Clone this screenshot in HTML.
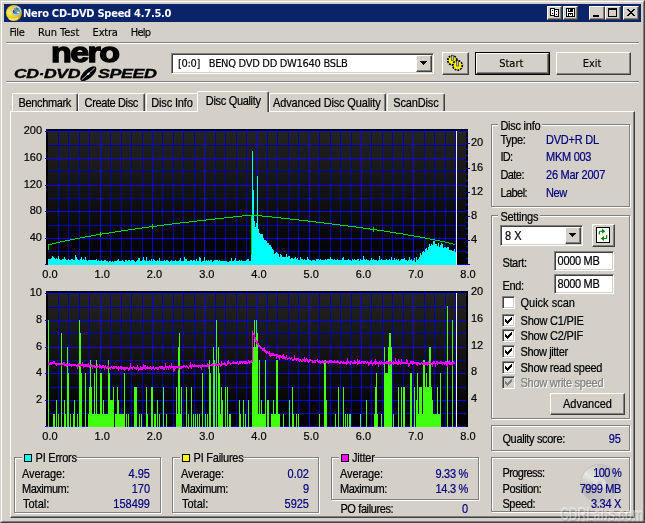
<!DOCTYPE html>
<html><head><meta charset="utf-8"><title>Nero CD-DVD Speed 4.7.5.0</title>
<style>
*{box-sizing:border-box;margin:0;padding:0}
html,body{width:645px;height:523px;overflow:hidden;background:#D4D0C8}
body{position:relative;font-family:"Liberation Sans",sans-serif;font-size:11px;color:#000;line-height:13px}
.a{position:absolute;white-space:nowrap}
.th{font-family:"DejaVu Sans Condensed","Liberation Sans",sans-serif;font-size:11px}
.t{transform:scaleY(1.125);transform-origin:0 0;-webkit-text-stroke:0.2px}
.th{-webkit-text-stroke:0.15px}
.nv{color:#000080}
.r{text-align:right}
/* window frame */
#win{left:0;top:0;width:645px;height:523px;border:1px solid;border-color:#D4D0C8 #404040 #404040 #D4D0C8}
#win2{left:1px;top:1px;width:643px;height:521px;border:1px solid;border-color:#fff #808080 #808080 #fff}
#title{left:4px;top:4px;width:637px;height:18px;background:#0A246A}
#title span{position:absolute;left:19px;letter-spacing:-0.25px;top:3px;color:#fff;font-weight:bold;font-family:"DejaVu Sans Condensed","Liberation Sans",sans-serif;font-size:11px;line-height:14px}
.btn{background:#D4D0C8;border:1px solid;border-color:#fff #404040 #404040 #fff;box-shadow:inset -1px -1px 0 #808080, inset 1px 1px 0 #D4D0C8}
.btn2{background:#D4D0C8;border:1px solid;border-color:#fff #404040 #404040 #fff;box-shadow:inset -1px -1px 0 #808080}
.sunk{background:#fff;border:1px solid;border-color:#808080 #fff #fff #808080;box-shadow:inset 1px 1px 0 #404040, inset -1px -1px 0 #D4D0C8}
.sep{height:2px;border-top:1px solid #808080;border-bottom:1px solid #fff}
.grp{border:1px solid #808080;box-shadow:1px 1px 0 #fff, inset 1px 1px 0 #fff}
.lg{background:#D4D0C8;padding:0 2px}
.tab{height:18px;border:1px solid;border-color:#fff #404040 transparent #fff;border-bottom:none;border-radius:2px 2px 0 0;box-shadow:inset -1px 0 0 #808080;background:#D4D0C8}
.lgo{font-size:12px;line-height:14px;font-weight:bold;font-style:italic;transform-origin:0 0;letter-spacing:-0.3px;-webkit-text-stroke:0.35px #000}
.cb{width:13px;height:13px}
.sq{width:8px;height:8px;border:1px solid #000}
#root{position:absolute;left:0;top:0;width:645px;height:523px;will-change:transform}
</style></head><body><div id="root">
<div class="a" id="win"></div><div class="a" id="win2"></div>
<div class="a" id="title"><span>Nero CD-DVD Speed 4.7.5.0</span></div>
<!-- title icon -->
<svg class="a" style="left:4px;top:4px" width="20" height="18" viewBox="4 4 20 18">
<defs><radialGradient id="ig" cx="0.3" cy="0.45" r="0.75"><stop offset="0" stop-color="#fff27a"/><stop offset="0.45" stop-color="#ecd21c"/><stop offset="0.8" stop-color="#d8b810"/><stop offset="1" stop-color="#9c8408"/></radialGradient></defs>
<circle cx="14" cy="13" r="8" fill="url(#ig)"/><path d="M9 18.500q4 2.500 9-0.500" stroke="#fff6b0" stroke-width="1.500" fill="none" opacity="0.700"/>
<circle cx="16.200" cy="10.800" r="4.600" fill="#e4e4ec" stroke="#a8a8b8" stroke-width="0.600"/><circle cx="16.300" cy="10.900" r="3.500" fill="#2c9ce0"/>
<path d="M18.300 8.200a3.500 3.500 0 0 0-2.500-0.800l0.500 2z" fill="#209030"/><path d="M13.300 9.500l1.300 3.800-1.200-0.300a3.500 3.500 0 0 1-0.100-3.500z" fill="#a01010"/>
<path d="M15 8.200l1.300 2.600 1.900 1.400" stroke="#ff7040" stroke-width="1.200" fill="none"/><circle cx="13.600" cy="9.300" r="0.700" fill="#ffe000"/><circle cx="18" cy="12.400" r="0.900" fill="#fff"/>
</svg>
<!-- caption buttons -->
<div class="a btn2" style="left:547px;top:6px;width:15px;height:14px"></div>
<div class="a btn2" style="left:563px;top:6px;width:15px;height:14px"></div>
<div class="a btn2" style="left:589px;top:6px;width:16px;height:14px"></div>
<div class="a btn2" style="left:605px;top:6px;width:16px;height:14px"></div>
<div class="a btn2" style="left:623px;top:6px;width:16px;height:14px"></div>
<svg class="a" style="left:547px;top:6px" width="92" height="14" viewBox="547 6 92 14" shape-rendering="crispEdges">
<rect x="550" y="8" width="5" height="8" fill="#000"/><rect x="551" y="9" width="3" height="6" fill="#fff"/><rect x="552" y="10" width="1" height="1" fill="#000"/><rect x="552" y="13" width="1" height="1" fill="#000"/>
<rect x="554" y="9" width="5" height="8" fill="#000"/><rect x="555" y="10" width="3" height="6" fill="#fff"/><rect x="556" y="11" width="1" height="1" fill="#000"/><rect x="556" y="14" width="1" height="1" fill="#000"/>
<rect x="566" y="8" width="9" height="9" fill="#000"/><rect x="567" y="9" width="1" height="7" fill="#fff"/><rect x="573" y="9" width="1" height="7" fill="#fff"/><rect x="568" y="12" width="5" height="1" fill="#fff"/><rect x="569" y="9" width="1" height="2" fill="#fff"/><rect x="569" y="14" width="3" height="2" fill="#fff"/><rect x="570" y="14" width="1" height="1" fill="#000"/>
<rect x="593" y="15" width="6" height="2" fill="#000"/>
<rect x="608" y="8" width="9" height="9" fill="#000"/><rect x="609" y="10" width="7" height="6" fill="#D4D0C8"/>
<path d="M627 9h2v1h1v1h2v-1h1v-1h2v1h-1v1h-1v1h-1v1h1v1h1v1h1v1h-2v-1h-1v-1h-2v1h-1v1h-2v-1h1v-1h1v-1h1v-1h-1v-1h-1v-1h-1z" fill="#000"/>
</svg>
<!-- menu -->
<div class="a th" style="left:9.5px;top:26px;letter-spacing:-0.4px">File</div>
<div class="a th" style="left:38px;top:26px">Run Test</div>
<div class="a th" style="left:92.6px;top:26px;letter-spacing:-0.2px">Extra</div>
<div class="a th" style="left:130.8px;top:26px;letter-spacing:-0.8px">Help</div>
<div class="a sep" style="left:6px;top:42px;width:633px"></div>
<!-- logo -->
<div class="a" id="nero" style="left:51.2px;top:37.4px;font-size:28px;line-height:32px;font-weight:bold;letter-spacing:-1.3px;-webkit-text-stroke:1.3px #000;transform-origin:0 0;transform:scaleX(1.215)">nero</div>
<div class="a lgo" id="cds1" style="left:14.3px;top:67.4px;transform:scaleX(1.47)">CD·DVD</div>
<div class="a lgo" id="cds2" style="left:98px;top:67.4px;transform:scaleX(1.49)">SPEED</div>
<svg class="a" style="left:78px;top:64px" width="22" height="20" viewBox="78 64 22 20"><g transform="rotate(-42 88.300 73.800)"><ellipse cx="88.300" cy="73.800" rx="10" ry="4.400" fill="#000"/><path d="M79.500 73.800H97" stroke="#D4D0C8" stroke-width="0.900"/><ellipse cx="88.300" cy="73.800" rx="1.600" ry="0.900" fill="#fff"/></g></svg>
<!-- drive combobox -->
<div class="a sunk" style="left:171px;top:53px;width:263px;height:21px"></div>
<div class="a th" style="left:178px;top:57px;line-height:14px;letter-spacing:-0.3px">[0:0]&nbsp;&nbsp;&nbsp;BENQ DVD DD DW1640 BSLB</div>
<div class="a btn" style="left:416px;top:55px;width:16px;height:17px"></div>
<svg class="a" style="left:420px;top:61px" width="8" height="5" viewBox="0 0 8 5" shape-rendering="crispEdges"><path d="M0 0h7l-3.5 4z" fill="#000"/></svg>
<!-- options button -->
<div class="a btn" style="left:442px;top:52px;width:27px;height:23px"></div>
<svg class="a" style="left:444px;top:53px" width="24" height="21" viewBox="444 53 24 21">
<g stroke="#000" stroke-width="1"><circle cx="452.300" cy="60.300" r="4.300" fill="#f4f000" stroke-dasharray="1.700 1" stroke-width="2.200"/><circle cx="452.300" cy="60.300" r="3.600" fill="#f4f000" stroke="none"/>
<circle cx="457.600" cy="65.400" r="4.500" fill="#f4f000" stroke-dasharray="1.700 1" stroke-width="2.200"/><circle cx="457.600" cy="65.400" r="3.800" fill="#f4f000" stroke="none"/></g>
<rect x="451.500" y="55.200" width="2" height="5.300" fill="#c8c8e0" stroke="#202020" stroke-width="0.600"/><rect x="456.700" y="60.800" width="2" height="5.200" fill="#c8c8e0" stroke="#202020" stroke-width="0.600"/>
</svg>
<!-- start / exit -->
<div class="a" style="left:475px;top:52px;width:75px;height:23px;border:1px solid #000"></div>
<div class="a btn" style="left:476px;top:53px;width:73px;height:21px"></div>
<div class="a th" style="left:473.8px;top:57px;width:75px;text-align:center;line-height:14px;letter-spacing:0px">Start</div>
<div class="a btn" style="left:556px;top:52px;width:75px;height:23px"></div>
<div class="a th" style="left:554.5px;top:57px;width:75px;text-align:center;line-height:14px;letter-spacing:0px">Exit</div>
<div class="a sep" style="left:6px;top:81px;width:633px"></div>
<!-- tab page -->
<div class="a" style="left:10px;top:111px;width:625px;height:407px;border:1px solid;border-color:#fff #404040 #404040 #fff;box-shadow:inset -1px -1px 0 #808080"></div>
<!-- tabs -->
<div class="a tab" style="left:12px;top:93px;width:66px"></div><div class="a t" style="left:18.6px;top:96px;letter-spacing:-0.38px">Benchmark</div>
<div class="a tab" style="left:78px;top:93px;width:67px"></div><div class="a t" style="left:84.6px;top:96px;letter-spacing:-0.38px">Create Disc</div>
<div class="a tab" style="left:146px;top:93px;width:54px"></div><div class="a t" style="left:151.2px;top:96px;letter-spacing:-0.14px">Disc Info</div>
<div class="a tab" style="left:269px;top:93px;width:117px"></div><div class="a t" style="left:273px;top:96px;letter-spacing:-0.15px">Advanced Disc Quality</div>
<div class="a tab" style="left:387px;top:93px;width:58px"></div><div class="a t" style="left:393.3px;top:96px;letter-spacing:-0.16px">ScanDisc</div>
<div class="a tab" style="left:197px;top:91px;width:72px;height:21px"></div><div class="a t" style="left:205.8px;top:94px;letter-spacing:-0.32px">Disc Quality</div>
<svg width="645" height="523" viewBox="0 0 645 523" style="position:absolute;left:0;top:0" shape-rendering="crispEdges">
<defs><linearGradient id="g1" x1="0" y1="0" x2="0" y2="1"><stop offset="0" stop-color="#232421"/><stop offset="1" stop-color="#000"/></linearGradient></defs>
<defs><linearGradient id="g1b" x1="0" y1="0" x2="0" y2="1"><stop offset="0" stop-color="#232421"/><stop offset="1" stop-color="#000"/></linearGradient></defs>
<rect x="46" y="129" width="422" height="136" fill="#000"/>
<rect x="48" y="131" width="418" height="134" fill="url(#g1)"/>
<rect x="58" y="131" width="1" height="134" fill="#0000B4"/>
<rect x="68" y="131" width="1" height="134" fill="#0000B4"/>
<rect x="79" y="131" width="1" height="134" fill="#0000B4"/>
<rect x="89" y="131" width="1" height="134" fill="#0000B4"/>
<rect x="100" y="131" width="1" height="134" fill="#0000FF"/>
<rect x="110" y="131" width="1" height="134" fill="#0000B4"/>
<rect x="121" y="131" width="1" height="134" fill="#0000B4"/>
<rect x="131" y="131" width="1" height="134" fill="#0000B4"/>
<rect x="142" y="131" width="1" height="134" fill="#0000B4"/>
<rect x="152" y="131" width="1" height="134" fill="#0000FF"/>
<rect x="162" y="131" width="1" height="134" fill="#0000B4"/>
<rect x="173" y="131" width="1" height="134" fill="#0000B4"/>
<rect x="183" y="131" width="1" height="134" fill="#0000B4"/>
<rect x="194" y="131" width="1" height="134" fill="#0000B4"/>
<rect x="204" y="131" width="1" height="134" fill="#0000FF"/>
<rect x="215" y="131" width="1" height="134" fill="#0000B4"/>
<rect x="225" y="131" width="1" height="134" fill="#0000B4"/>
<rect x="236" y="131" width="1" height="134" fill="#0000B4"/>
<rect x="246" y="131" width="1" height="134" fill="#0000B4"/>
<rect x="257" y="131" width="1" height="134" fill="#0000FF"/>
<rect x="267" y="131" width="1" height="134" fill="#0000B4"/>
<rect x="277" y="131" width="1" height="134" fill="#0000B4"/>
<rect x="288" y="131" width="1" height="134" fill="#0000B4"/>
<rect x="298" y="131" width="1" height="134" fill="#0000B4"/>
<rect x="309" y="131" width="1" height="134" fill="#0000FF"/>
<rect x="319" y="131" width="1" height="134" fill="#0000B4"/>
<rect x="330" y="131" width="1" height="134" fill="#0000B4"/>
<rect x="340" y="131" width="1" height="134" fill="#0000B4"/>
<rect x="351" y="131" width="1" height="134" fill="#0000B4"/>
<rect x="361" y="131" width="1" height="134" fill="#0000FF"/>
<rect x="371" y="131" width="1" height="134" fill="#0000B4"/>
<rect x="382" y="131" width="1" height="134" fill="#0000B4"/>
<rect x="392" y="131" width="1" height="134" fill="#0000B4"/>
<rect x="403" y="131" width="1" height="134" fill="#0000B4"/>
<rect x="413" y="131" width="1" height="134" fill="#0000FF"/>
<rect x="424" y="131" width="1" height="134" fill="#0000B4"/>
<rect x="434" y="131" width="1" height="134" fill="#0000B4"/>
<rect x="445" y="131" width="1" height="134" fill="#0000B4"/>
<rect x="455" y="131" width="1" height="134" fill="#0000B4"/>
<rect x="45" y="131" width="421" height="1" fill="#0000FF"/>
<rect x="48" y="145" width="418" height="1" fill="#0000B4"/>
<rect x="45" y="158" width="421" height="1" fill="#0000FF"/>
<rect x="48" y="171" width="418" height="1" fill="#0000B4"/>
<rect x="45" y="185" width="421" height="1" fill="#0000FF"/>
<rect x="48" y="198" width="418" height="1" fill="#0000B4"/>
<rect x="45" y="211" width="421" height="1" fill="#0000FF"/>
<rect x="48" y="225" width="418" height="1" fill="#0000B4"/>
<rect x="45" y="238" width="421" height="1" fill="#0000FF"/>
<rect x="48" y="251" width="418" height="1" fill="#0000B4"/>
<rect x="45" y="264" width="421" height="1" fill="#0000FF"/>
<path d="M48,265V259H49V259H50V259H51V258H52V256H53V257H54V258H55V259H56V258H57V259H58V256H59V259H60V260H61V260H62V259H63V259H64V257H65V259H66V260H67V260H68V259H69V260H70V260H71V259H72V259H73V260H74V260H75V255H76V257H77V259H78V260H79V260H80V259H81V257H82V260H83V259H84V260H85V257H86V260H87V261H88V260H89V260H90V260H91V260H92V260H93V260H94V260H95V260H96V259H97V261H98V260H99V261H100V261H101V260H102V261H103V261H104V260H105V260H106V261H107V261H108V262H109V261H110V261H111V262H112V261H113V262H114V261H115V261H116V261H117V260H118V259H119V261H120V261H121V261H122V260H123V261H124V262H125V260H126V260H127V261H128V260H129V260H130V261H131V260H132V260H133V260H134V261H135V262H136V261H137V260H138V258H139V258H140V261H141V261H142V260H143V257H144V260H145V261H146V257H147V261H148V261H149V260H150V261H151V259H152V261H153V259H154V260H155V261H156V261H157V260H158V261H159V258H160V261H161V261H162V261H163V261H164V260H165V261H166V260H167V260H168V261H169V262H170V261H171V260H172V261H173V261H174V261H175V260H176V261H177V261H178V261H179V260H180V258H181V261H182V261H183V261H184V257H185V259H186V259H187V261H188V261H189V261H190V260H191V260H192V261H193V260H194V260H195V261H196V259H197V261H198V261H199V257H200V258H201V262H202V261H203V261H204V257H205V261H206V260H207V261H208V260H209V261H210V260H211V260H212V262H213V261H214V260H215V260H216V260H217V260H218V261H219V260H220V261H221V261H222V261H223V261H224V261H225V261H226V261H227V262H228V262H229V261H230V261H231V258H232V261H233V261H234V260H235V258H236V261H237V261H238V261H239V260H240V261H241V260H242V261H243V261H244V261H245V261H246V260H247V259H248V259H249V261H250V261H251V223H252V151H253V190H254V221H255V227H256V223H257V176H258V229H259V233H260V234H261V234H262V234H263V238H264V240H265V240H266V241H267V243H268V243H269V245H270V245H271V247H272V249H273V250H274V254H275V253H276V252H277V253H278V254H279V257H280V254H281V255H282V257H283V257H284V257H285V257H286V254H287V257H288V256H289V256H290V259H291V258H292V258H293V259H294V258H295V257H296V259H297V258H298V260H299V260H300V257H301V259H302V259H303V260H304V259H305V260H306V260H307V257H308V259H309V260H310V260H311V261H312V260H313V260H314V260H315V261H316V259H317V259H318V259H319V260H320V259H321V260H322V260H323V260H324V260H325V259H326V260H327V259H328V259H329V259H330V257H331V259H332V259H333V260H334V259H335V260H336V260H337V259H338V260H339V260H340V260H341V260H342V258H343V257H344V260H345V260H346V260H347V260H348V259H349V260H350V260H351V261H352V259H353V260H354V259H355V260H356V260H357V259H358V259H359V261H360V259H361V260H362V260H363V256H364V259H365V260H366V259H367V260H368V260H369V261H370V260H371V258H372V260H373V259H374V260H375V260H376V260H377V261H378V260H379V256H380V260H381V259H382V260H383V260H384V260H385V260H386V259H387V260H388V260H389V259H390V260H391V257H392V260H393V260H394V258H395V260H396V259H397V260H398V259H399V261H400V260H401V259H402V259H403V259H404V258H405V260H406V260H407V261H408V260H409V257H410V260H411V259H412V261H413V260H414V258H415V262H416V257H417V260H418V259H419V257H420V253H421V255H422V252H423V251H424V252H425V249H426V248H427V250H428V247H429V244H430V246H431V244H432V245H433V241H434V241H435V244H436V244H437V246H438V243H439V247H440V245H441V243H442V244H443V248H444V247H445V247H446V248H447V247H448V247H449V250H450V250H451V250H452V251H453V251H454V249H455V252H456V265Z" fill="#00FFFF"/>
<path d="M48,244h1v6h-1zM48,244h1v1h-1zM49,244h1v1h-1zM50,244h1v1h-1zM51,244h1v1h-1zM52,243h1v1h-1zM53,243h1v1h-1zM54,243h1v1h-1zM55,243h1v1h-1zM56,242h1v1h-1zM57,242h1v1h-1zM58,242h1v1h-1zM59,242h1v1h-1zM60,241h1v1h-1zM61,241h1v1h-1zM62,241h1v1h-1zM63,241h1v1h-1zM64,241h1v1h-1zM65,240h1v1h-1zM66,240h1v1h-1zM67,240h1v1h-1zM68,240h1v1h-1zM69,240h1v1h-1zM70,239h1v1h-1zM71,239h1v1h-1zM72,239h1v1h-1zM73,239h1v1h-1zM74,239h1v1h-1zM75,238h1v1h-1zM76,238h1v1h-1zM77,238h1v1h-1zM78,238h1v1h-1zM79,238h1v1h-1zM80,237h1v1h-1zM81,237h1v1h-1zM82,237h1v1h-1zM83,237h1v1h-1zM84,237h1v1h-1zM85,236h1v1h-1zM86,236h1v1h-1zM87,236h1v1h-1zM88,236h1v1h-1zM89,236h1v1h-1zM90,236h1v1h-1zM91,235h1v1h-1zM92,235h1v1h-1zM93,235h1v1h-1zM94,235h1v1h-1zM95,235h1v1h-1zM96,234h1v1h-1zM97,234h1v1h-1zM98,234h1v1h-1zM99,234h1v1h-1zM100,234h1v1h-1zM101,234h1v1h-1zM102,233h1v1h-1zM103,233h1v1h-1zM104,233h1v1h-1zM105,233h1v1h-1zM106,233h1v1h-1zM107,233h1v1h-1zM108,233h1v1h-1zM109,232h1v1h-1zM110,232h1v1h-1zM111,232h1v1h-1zM112,232h1v1h-1zM113,232h1v1h-1zM114,232h1v1h-1zM115,231h1v1h-1zM116,231h1v1h-1zM117,231h1v1h-1zM118,231h1v1h-1zM119,231h1v1h-1zM120,231h1v1h-1zM121,230h1v1h-1zM122,230h1v1h-1zM123,230h1v1h-1zM124,230h1v1h-1zM125,230h1v1h-1zM126,230h1v1h-1zM127,230h1v1h-1zM128,229h1v1h-1zM129,229h1v1h-1zM130,229h1v1h-1zM131,229h1v1h-1zM132,229h1v1h-1zM133,229h1v1h-1zM134,229h1v1h-1zM135,228h1v1h-1zM136,228h1v1h-1zM137,228h1v1h-1zM138,228h1v1h-1zM139,228h1v1h-1zM140,228h1v1h-1zM141,228h1v1h-1zM142,227h1v1h-1zM143,227h1v1h-1zM144,227h1v1h-1zM145,227h1v1h-1zM146,227h1v1h-1zM147,227h1v1h-1zM148,227h1v1h-1zM149,226h1v1h-1zM150,226h1v1h-1zM151,226h1v1h-1zM152,226h1v1h-1zM153,226h1v1h-1zM154,226h1v1h-1zM155,226h1v1h-1zM156,226h1v1h-1zM157,225h1v1h-1zM158,225h1v1h-1zM159,225h1v1h-1zM160,225h1v1h-1zM161,225h1v1h-1zM162,225h1v1h-1zM163,225h1v1h-1zM164,224h1v1h-1zM165,224h1v1h-1zM166,224h1v1h-1zM167,224h1v1h-1zM168,224h1v1h-1zM169,224h1v1h-1zM170,224h1v1h-1zM171,224h1v1h-1zM172,223h1v1h-1zM173,223h1v1h-1zM174,223h1v1h-1zM175,223h1v1h-1zM176,223h1v1h-1zM177,223h1v1h-1zM178,223h1v1h-1zM179,223h1v1h-1zM180,222h1v1h-1zM181,222h1v1h-1zM182,222h1v1h-1zM183,222h1v1h-1zM184,222h1v1h-1zM185,222h1v1h-1zM186,222h1v1h-1zM187,222h1v1h-1zM188,222h1v1h-1zM189,221h1v1h-1zM190,221h1v1h-1zM191,221h1v1h-1zM192,221h1v1h-1zM193,221h1v1h-1zM194,221h1v1h-1zM195,221h1v1h-1zM196,221h1v1h-1zM197,220h1v1h-1zM198,220h1v1h-1zM199,220h1v1h-1zM200,220h1v1h-1zM201,220h1v1h-1zM202,220h1v1h-1zM203,220h1v1h-1zM204,220h1v1h-1zM205,220h1v1h-1zM206,219h1v1h-1zM207,219h1v1h-1zM208,219h1v1h-1zM209,219h1v1h-1zM210,219h1v1h-1zM211,219h1v1h-1zM212,219h1v1h-1zM213,219h1v1h-1zM214,219h1v1h-1zM215,218h1v1h-1zM216,218h1v1h-1zM217,218h1v1h-1zM218,218h1v1h-1zM219,218h1v1h-1zM220,218h1v1h-1zM221,218h1v1h-1zM222,218h1v1h-1zM223,218h1v1h-1zM224,217h1v1h-1zM225,217h1v1h-1zM226,217h1v1h-1zM227,217h1v1h-1zM228,217h1v1h-1zM229,217h1v1h-1zM230,217h1v1h-1zM231,217h1v1h-1zM232,217h1v1h-1zM233,216h1v1h-1zM234,216h1v1h-1zM235,216h1v1h-1zM236,216h1v1h-1zM237,216h1v1h-1zM238,216h1v1h-1zM239,216h1v1h-1zM240,216h1v1h-1zM241,216h1v1h-1zM242,215h1v1h-1zM243,215h1v1h-1zM244,215h1v1h-1zM245,215h1v1h-1zM246,215h1v1h-1zM247,215h1v1h-1zM248,215h1v1h-1zM249,215h1v1h-1zM250,215h1v1h-1zM251,215h1v40h-1zM251,215h1v1h-1zM252,214h1v1h-1zM253,215h1v1h-1zM254,215h1v1h-1zM255,215h1v1h-1zM256,215h1v1h-1zM257,215h1v1h-1zM258,215h1v1h-1zM259,215h1v1h-1zM260,215h1v1h-1zM261,215h1v1h-1zM262,216h1v1h-1zM263,216h1v1h-1zM264,216h1v1h-1zM265,216h1v1h-1zM266,216h1v1h-1zM267,216h1v1h-1zM268,216h1v1h-1zM269,216h1v1h-1zM270,216h1v1h-1zM271,216h1v1h-1zM272,217h1v1h-1zM273,217h1v1h-1zM274,217h1v1h-1zM275,217h1v1h-1zM276,217h1v1h-1zM277,217h1v1h-1zM278,217h1v1h-1zM279,217h1v1h-1zM280,217h1v1h-1zM281,218h1v1h-1zM282,218h1v1h-1zM283,218h1v1h-1zM284,218h1v1h-1zM285,218h1v1h-1zM286,218h1v1h-1zM287,218h1v1h-1zM288,218h1v1h-1zM289,218h1v1h-1zM290,219h1v1h-1zM291,219h1v1h-1zM292,219h1v1h-1zM293,219h1v1h-1zM294,219h1v1h-1zM295,219h1v1h-1zM296,219h1v1h-1zM297,219h1v1h-1zM298,219h1v1h-1zM299,220h1v1h-1zM300,220h1v1h-1zM301,220h1v1h-1zM302,220h1v1h-1zM303,220h1v1h-1zM304,220h1v1h-1zM305,220h1v1h-1zM306,220h1v1h-1zM307,220h1v1h-1zM308,221h1v1h-1zM309,221h1v1h-1zM310,221h1v1h-1zM311,221h1v1h-1zM312,221h1v1h-1zM313,221h1v1h-1zM314,221h1v1h-1zM315,221h1v1h-1zM316,222h1v1h-1zM317,222h1v1h-1zM318,222h1v1h-1zM319,222h1v1h-1zM320,222h1v1h-1zM321,222h1v1h-1zM322,222h1v1h-1zM323,222h1v1h-1zM324,223h1v1h-1zM325,223h1v1h-1zM326,223h1v1h-1zM327,223h1v1h-1zM328,223h1v1h-1zM329,223h1v1h-1zM330,223h1v1h-1zM331,223h1v1h-1zM332,224h1v1h-1zM333,224h1v1h-1zM334,224h1v1h-1zM335,224h1v1h-1zM336,224h1v1h-1zM337,224h1v1h-1zM338,224h1v1h-1zM339,224h1v1h-1zM340,225h1v1h-1zM341,225h1v1h-1zM342,225h1v1h-1zM343,225h1v1h-1zM344,225h1v1h-1zM345,225h1v1h-1zM346,225h1v1h-1zM347,225h1v1h-1zM348,226h1v1h-1zM349,226h1v1h-1zM350,226h1v1h-1zM351,226h1v1h-1zM352,226h1v1h-1zM353,226h1v1h-1zM354,226h1v1h-1zM355,226h1v1h-1zM356,227h1v1h-1zM357,227h1v1h-1zM358,227h1v1h-1zM359,227h1v1h-1zM360,227h1v1h-1zM361,227h1v1h-1zM362,227h1v1h-1zM363,228h1v1h-1zM364,228h1v1h-1zM365,228h1v1h-1zM366,228h1v1h-1zM367,228h1v1h-1zM368,228h1v1h-1zM369,228h1v1h-1zM370,229h1v1h-1zM371,229h1v1h-1zM372,229h1v1h-1zM373,229h1v1h-1zM374,229h1v1h-1zM375,229h1v1h-1zM376,229h1v1h-1zM377,230h1v1h-1zM378,230h1v1h-1zM379,230h1v1h-1zM380,230h1v1h-1zM381,230h1v1h-1zM382,230h1v1h-1zM383,230h1v1h-1zM384,231h1v1h-1zM385,231h1v1h-1zM386,231h1v1h-1zM387,231h1v1h-1zM388,231h1v1h-1zM389,231h1v1h-1zM390,232h1v1h-1zM391,232h1v1h-1zM392,232h1v1h-1zM393,232h1v1h-1zM394,232h1v1h-1zM395,232h1v1h-1zM396,233h1v1h-1zM397,233h1v1h-1zM398,233h1v1h-1zM399,233h1v1h-1zM400,233h1v1h-1zM401,233h1v1h-1zM402,233h1v1h-1zM403,234h1v1h-1zM404,234h1v1h-1zM405,234h1v1h-1zM406,234h1v1h-1zM407,234h1v1h-1zM408,235h1v1h-1zM409,235h1v1h-1zM410,235h1v1h-1zM411,235h1v1h-1zM412,235h1v1h-1zM413,235h1v1h-1zM414,236h1v1h-1zM415,236h1v1h-1zM416,236h1v1h-1zM417,236h1v1h-1zM418,236h1v1h-1zM419,236h1v1h-1zM420,237h1v1h-1zM421,237h1v1h-1zM422,237h1v1h-1zM423,237h1v1h-1zM424,237h1v1h-1zM425,238h1v1h-1zM426,238h1v1h-1zM427,238h1v1h-1zM428,238h1v1h-1zM429,238h1v1h-1zM430,239h1v1h-1zM431,239h1v1h-1zM432,239h1v1h-1zM433,239h1v1h-1zM434,239h1v1h-1zM435,240h1v1h-1zM436,240h1v1h-1zM437,240h1v1h-1zM438,240h1v1h-1zM439,240h1v1h-1zM440,241h1v1h-1zM441,241h1v1h-1zM442,241h1v1h-1zM443,241h1v1h-1zM444,241h1v1h-1zM445,242h1v1h-1zM446,242h1v1h-1zM447,242h1v1h-1zM448,242h1v1h-1zM449,243h1v1h-1zM450,243h1v1h-1zM451,243h1v1h-1zM452,243h1v1h-1zM453,244h1v1h-1zM454,244h1v1h-1z" fill="#00DC00"/>
<rect x="100" y="232" width="1" height="5" fill="#00DC00"/>
<rect x="152" y="224" width="1" height="5" fill="#00DC00"/>
<rect x="373" y="227" width="1" height="5" fill="#00DC00"/>
<rect x="456" y="131" width="1" height="134" fill="#F0F0F0"/>
<rect x="46" y="291" width="422" height="136" fill="#000"/>
<rect x="48" y="293" width="418" height="134" fill="url(#g1b)"/>
<rect x="58" y="293" width="1" height="134" fill="#0000B4"/>
<rect x="68" y="293" width="1" height="134" fill="#0000B4"/>
<rect x="79" y="293" width="1" height="134" fill="#0000B4"/>
<rect x="89" y="293" width="1" height="134" fill="#0000B4"/>
<rect x="100" y="293" width="1" height="134" fill="#0000FF"/>
<rect x="110" y="293" width="1" height="134" fill="#0000B4"/>
<rect x="121" y="293" width="1" height="134" fill="#0000B4"/>
<rect x="131" y="293" width="1" height="134" fill="#0000B4"/>
<rect x="142" y="293" width="1" height="134" fill="#0000B4"/>
<rect x="152" y="293" width="1" height="134" fill="#0000FF"/>
<rect x="162" y="293" width="1" height="134" fill="#0000B4"/>
<rect x="173" y="293" width="1" height="134" fill="#0000B4"/>
<rect x="183" y="293" width="1" height="134" fill="#0000B4"/>
<rect x="194" y="293" width="1" height="134" fill="#0000B4"/>
<rect x="204" y="293" width="1" height="134" fill="#0000FF"/>
<rect x="215" y="293" width="1" height="134" fill="#0000B4"/>
<rect x="225" y="293" width="1" height="134" fill="#0000B4"/>
<rect x="236" y="293" width="1" height="134" fill="#0000B4"/>
<rect x="246" y="293" width="1" height="134" fill="#0000B4"/>
<rect x="257" y="293" width="1" height="134" fill="#0000FF"/>
<rect x="267" y="293" width="1" height="134" fill="#0000B4"/>
<rect x="277" y="293" width="1" height="134" fill="#0000B4"/>
<rect x="288" y="293" width="1" height="134" fill="#0000B4"/>
<rect x="298" y="293" width="1" height="134" fill="#0000B4"/>
<rect x="309" y="293" width="1" height="134" fill="#0000FF"/>
<rect x="319" y="293" width="1" height="134" fill="#0000B4"/>
<rect x="330" y="293" width="1" height="134" fill="#0000B4"/>
<rect x="340" y="293" width="1" height="134" fill="#0000B4"/>
<rect x="351" y="293" width="1" height="134" fill="#0000B4"/>
<rect x="361" y="293" width="1" height="134" fill="#0000FF"/>
<rect x="371" y="293" width="1" height="134" fill="#0000B4"/>
<rect x="382" y="293" width="1" height="134" fill="#0000B4"/>
<rect x="392" y="293" width="1" height="134" fill="#0000B4"/>
<rect x="403" y="293" width="1" height="134" fill="#0000B4"/>
<rect x="413" y="293" width="1" height="134" fill="#0000FF"/>
<rect x="424" y="293" width="1" height="134" fill="#0000B4"/>
<rect x="434" y="293" width="1" height="134" fill="#0000B4"/>
<rect x="445" y="293" width="1" height="134" fill="#0000B4"/>
<rect x="455" y="293" width="1" height="134" fill="#0000B4"/>
<rect x="45" y="293" width="421" height="1" fill="#0000FF"/>
<rect x="48" y="307" width="418" height="1" fill="#0000B4"/>
<rect x="45" y="320" width="421" height="1" fill="#0000FF"/>
<rect x="48" y="333" width="418" height="1" fill="#0000B4"/>
<rect x="45" y="347" width="421" height="1" fill="#0000FF"/>
<rect x="48" y="360" width="418" height="1" fill="#0000B4"/>
<rect x="45" y="373" width="421" height="1" fill="#0000FF"/>
<rect x="48" y="387" width="418" height="1" fill="#0000B4"/>
<rect x="45" y="400" width="421" height="1" fill="#0000FF"/>
<rect x="48" y="413" width="418" height="1" fill="#0000B4"/>
<rect x="45" y="426" width="421" height="1" fill="#0000FF"/>
<path d="M48,320H49V427H48ZM53,414H54V427H53ZM54,414H55V427H54ZM56,400H57V427H56ZM58,414H59V427H58ZM61,333H62V427H61ZM64,400H65V427H64ZM65,414H66V427H65ZM67,347H68V427H67ZM68,373H69V427H68ZM70,414H71V427H70ZM73,414H74V427H73ZM74,400H75V427H74ZM77,414H78V427H77ZM79,320H80V427H79ZM80,333H81V427H80ZM81,373H82V427H81ZM85,373H86V427H85ZM90,360H91V427H90ZM91,387H92V427H91ZM94,373H95V427H94ZM96,360H97V427H96ZM100,373H101V427H100ZM101,373H102V427H101ZM103,400H104V427H103ZM108,360H109V427H108ZM109,373H110V427H109ZM113,387H114V427H113ZM117,387H118V427H117ZM118,400H119V427H118ZM124,373H125V427H124ZM126,414H127V427H126ZM128,414H129V427H128ZM134,387H135V427H134ZM135,387H136V427H135ZM136,387H137V427H136ZM139,414H140V427H139ZM141,414H142V427H141ZM146,387H147V427H146ZM147,414H148V427H147ZM151,387H152V427H151ZM152,387H153V427H152ZM154,414H155V427H154ZM155,414H156V427H155ZM157,400H158V427H157ZM159,414H160V427H159ZM163,387H164V427H163ZM166,414H167V427H166ZM176,387H177V427H176ZM178,347H179V427H178ZM179,333H180V427H179ZM181,387H182V427H181ZM186,387H187V427H186ZM188,414H189V427H188ZM191,387H192V427H191ZM193,414H194V427H193ZM195,414H196V427H195ZM197,414H198V427H197ZM199,414H200V427H199ZM202,373H203V427H202ZM88,414H92V427H88ZM89,387H92V427H89ZM92,414H110V427H92ZM108,400H113V427H108ZM115,414H124V427H115ZM176,414H182V427H176ZM195,414H196V427H195ZM197,414H198V427H197ZM199,414H200V427H199ZM205,414H206V427H205ZM207,414H208V427H207ZM209,360H210V427H209ZM210,373H211V427H210ZM213,347H214V427H213ZM214,360H215V427H214ZM216,320H217V427H216ZM218,347H219V427H218ZM219,373H220V427H219ZM221,387H222V427H221ZM222,400H223V427H222ZM225,387H226V427H225ZM227,387H228V427H227ZM229,414H230V427H229ZM230,414H231V427H230ZM239,400H240V427H239ZM240,414H241V427H240ZM243,400H244V427H243ZM245,414H246V427H245ZM248,400H249V427H248ZM254,320H255V427H254ZM256,320H257V427H256ZM257,333H258V427H257ZM259,360H260V427H259ZM261,400H262V427H261ZM265,360H266V427H265ZM267,400H268V427H267ZM268,400H269V427H268ZM273,400H274V427H273ZM276,360H277V427H276ZM277,360H278V427H277ZM283,414H284V427H283ZM289,400H290V427H289ZM292,387H293V427H292ZM293,414H294V427H293ZM296,414H297V427H296ZM298,414H299V427H298ZM319,414H320V427H319ZM324,360H325V427H324ZM325,360H326V427H325ZM326,400H327V427H326ZM335,414H336V427H335ZM338,387H339V427H338ZM343,387H344V427H343ZM345,414H346V427H345ZM347,414H348V427H347ZM349,414H350V427H349ZM350,414H351V427H350ZM218,414H223V427H218ZM252,347H258V427H252ZM258,414H266V427H258ZM271,414H280V427H271ZM335,414H336V427H335ZM360,414H361V427H360ZM366,400H367V427H366ZM375,387H376V427H375ZM376,373H377V427H376ZM381,414H382V427H381ZM384,347H385V427H384ZM393,414H394V427H393ZM398,387H399V427H398ZM401,387H402V427H401ZM403,387H404V427H403ZM404,387H405V427H404ZM410,373H411V427H410ZM411,373H412V427H411ZM414,387H415V427H414ZM416,400H417V427H416ZM417,373H418V427H417ZM419,387H420V427H419ZM420,387H421V427H420ZM421,387H422V427H421ZM423,360H424V427H423ZM424,360H425V427H424ZM426,373H427V427H426ZM429,347H430V427H429ZM430,347H431V427H430ZM437,387H438V427H437ZM440,373H441V427H440ZM447,306H448V427H447ZM452,320H453V427H452ZM374,414H378V427H374ZM385,373H388V427H385ZM388,347H392V427H388ZM389,333H391V427H389ZM418,414H441V427H418ZM423,387H432V427H423ZM430,400H433V427H430Z" fill="#40FF10"/>
<path d="M48,362h1v3h-1zM49,363h1v2h-1zM50,362h1v3h-1zM51,362h1v3h-1zM52,362h1v2h-1zM53,361h1v3h-1zM54,361h1v3h-1zM55,363h1v2h-1zM56,363h1v3h-1zM57,363h1v2h-1zM58,363h1v2h-1zM59,363h1v2h-1zM60,363h1v2h-1zM61,364h1v2h-1zM62,363h1v2h-1zM63,362h1v3h-1zM64,362h1v4h-1zM65,364h1v2h-1zM66,363h1v4h-1zM67,364h1v2h-1zM68,364h1v2h-1zM69,363h1v3h-1zM70,364h1v2h-1zM71,364h1v3h-1zM72,364h1v2h-1zM73,364h1v2h-1zM74,364h1v2h-1zM75,364h1v2h-1zM76,365h1v2h-1zM77,364h1v5h-1zM78,363h1v4h-1zM79,364h1v2h-1zM80,364h1v3h-1zM81,364h1v2h-1zM82,362h1v4h-1zM83,364h1v4h-1zM84,364h1v3h-1zM85,364h1v3h-1zM86,364h1v3h-1zM87,364h1v3h-1zM88,363h1v4h-1zM89,365h1v3h-1zM90,365h1v2h-1zM91,364h1v3h-1zM92,365h1v4h-1zM93,365h1v2h-1zM94,365h1v3h-1zM95,366h1v2h-1zM96,366h1v2h-1zM97,364h1v4h-1zM98,366h1v1h-1zM99,364h1v4h-1zM100,365h1v3h-1zM101,366h1v3h-1zM102,365h1v3h-1zM103,365h1v3h-1zM104,366h1v4h-1zM105,365h1v3h-1zM106,367h1v2h-1zM107,366h1v3h-1zM108,365h1v3h-1zM109,367h1v2h-1zM110,367h1v3h-1zM111,366h1v2h-1zM112,367h1v2h-1zM113,366h1v3h-1zM114,366h1v3h-1zM115,366h1v2h-1zM116,366h1v3h-1zM117,367h1v2h-1zM118,366h1v5h-1zM119,367h1v2h-1zM120,366h1v3h-1zM121,366h1v4h-1zM122,367h1v2h-1zM123,367h1v3h-1zM124,367h1v4h-1zM125,367h1v3h-1zM126,367h1v2h-1zM127,367h1v2h-1zM128,368h1v3h-1zM129,367h1v3h-1zM130,363h1v6h-1zM131,367h1v2h-1zM132,367h1v3h-1zM133,366h1v2h-1zM134,367h1v2h-1zM135,367h1v2h-1zM136,367h1v3h-1zM137,365h1v4h-1zM138,367h1v4h-1zM139,368h1v2h-1zM140,366h1v4h-1zM141,367h1v3h-1zM142,367h1v3h-1zM143,364h1v5h-1zM144,365h1v4h-1zM145,365h1v5h-1zM146,367h1v2h-1zM147,366h1v3h-1zM148,367h1v2h-1zM149,367h1v2h-1zM150,366h1v3h-1zM151,367h1v3h-1zM152,367h1v2h-1zM153,366h1v3h-1zM154,368h1v2h-1zM155,367h1v2h-1zM156,367h1v2h-1zM157,367h1v3h-1zM158,367h1v3h-1zM159,366h1v2h-1zM160,366h1v3h-1zM161,366h1v3h-1zM162,366h1v3h-1zM163,367h1v3h-1zM164,367h1v3h-1zM165,363h1v5h-1zM166,366h1v4h-1zM167,366h1v2h-1zM168,366h1v4h-1zM169,365h1v3h-1zM170,366h1v3h-1zM171,363h1v5h-1zM172,366h1v2h-1zM173,366h1v6h-1zM174,366h1v5h-1zM175,366h1v3h-1zM176,366h1v2h-1zM177,366h1v2h-1zM178,366h1v4h-1zM179,366h1v2h-1zM180,366h1v3h-1zM181,366h1v3h-1zM182,366h1v2h-1zM183,365h1v3h-1zM184,365h1v2h-1zM185,366h1v2h-1zM186,365h1v2h-1zM187,366h1v2h-1zM188,367h1v2h-1zM189,365h1v2h-1zM190,362h1v6h-1zM191,365h1v4h-1zM192,364h1v3h-1zM193,365h1v2h-1zM194,364h1v3h-1zM195,365h1v2h-1zM196,365h1v2h-1zM197,365h1v2h-1zM198,365h1v3h-1zM199,365h1v2h-1zM200,365h1v3h-1zM201,365h1v5h-1zM202,364h1v3h-1zM203,365h1v2h-1zM204,365h1v2h-1zM205,365h1v2h-1zM206,365h1v2h-1zM207,363h1v4h-1zM208,364h1v5h-1zM209,364h1v1h-1zM210,365h1v1h-1zM211,364h1v2h-1zM212,363h1v3h-1zM213,364h1v2h-1zM214,364h1v1h-1zM215,363h1v3h-1zM216,363h1v3h-1zM217,364h1v2h-1zM218,363h1v3h-1zM219,363h1v2h-1zM220,364h1v3h-1zM221,361h1v5h-1zM222,363h1v2h-1zM223,363h1v2h-1zM224,362h1v3h-1zM225,363h1v3h-1zM226,364h1v2h-1zM227,361h1v4h-1zM228,360h1v4h-1zM229,362h1v2h-1zM230,363h1v2h-1zM231,363h1v1h-1zM232,362h1v2h-1zM233,361h1v3h-1zM234,362h1v2h-1zM235,362h1v2h-1zM236,362h1v2h-1zM237,361h1v3h-1zM238,363h1v2h-1zM239,361h1v3h-1zM240,361h1v3h-1zM241,361h1v2h-1zM242,361h1v3h-1zM243,361h1v2h-1zM244,361h1v3h-1zM245,361h1v3h-1zM246,361h1v3h-1zM247,362h1v2h-1zM248,360h1v3h-1zM249,361h1v3h-1zM250,361h1v2h-1zM251,360h1v3h-1zM252,331h1v31h-1zM253,333h1v2h-1zM254,334h1v5h-1zM255,337h1v5h-1zM256,340h1v4h-1zM257,341h1v4h-1zM258,343h1v4h-1zM259,345h1v2h-1zM260,346h1v3h-1zM261,347h1v2h-1zM262,348h1v3h-1zM263,348h1v3h-1zM264,347h1v5h-1zM265,350h1v3h-1zM266,351h1v3h-1zM267,351h1v2h-1zM268,352h1v2h-1zM269,351h1v5h-1zM270,353h1v4h-1zM271,353h1v3h-1zM272,353h1v3h-1zM273,353h1v3h-1zM274,354h1v2h-1zM275,354h1v2h-1zM276,354h1v5h-1zM277,354h1v3h-1zM278,355h1v3h-1zM279,355h1v5h-1zM280,355h1v3h-1zM281,356h1v2h-1zM282,355h1v4h-1zM283,354h1v5h-1zM284,356h1v3h-1zM285,357h1v3h-1zM286,355h1v3h-1zM287,358h1v2h-1zM288,358h1v1h-1zM289,357h1v2h-1zM290,358h1v2h-1zM291,357h1v2h-1zM292,359h1v2h-1zM293,359h1v2h-1zM294,355h1v5h-1zM295,358h1v2h-1zM296,358h1v3h-1zM297,358h1v2h-1zM298,358h1v3h-1zM299,359h1v3h-1zM300,359h1v2h-1zM301,360h1v2h-1zM302,359h1v3h-1zM303,359h1v2h-1zM304,357h1v5h-1zM305,359h1v3h-1zM306,358h1v3h-1zM307,359h1v3h-1zM308,360h1v3h-1zM309,359h1v3h-1zM310,359h1v2h-1zM311,360h1v1h-1zM312,360h1v3h-1zM313,361h1v2h-1zM314,360h1v3h-1zM315,360h1v3h-1zM316,360h1v1h-1zM317,359h1v3h-1zM318,361h1v2h-1zM319,360h1v3h-1zM320,361h1v3h-1zM321,361h1v2h-1zM322,360h1v3h-1zM323,361h1v3h-1zM324,360h1v3h-1zM325,361h1v2h-1zM326,361h1v2h-1zM327,361h1v2h-1zM328,361h1v3h-1zM329,360h1v3h-1zM330,360h1v3h-1zM331,360h1v3h-1zM332,361h1v2h-1zM333,361h1v2h-1zM334,360h1v3h-1zM335,361h1v2h-1zM336,361h1v2h-1zM337,360h1v3h-1zM338,361h1v2h-1zM339,362h1v2h-1zM340,361h1v3h-1zM341,361h1v2h-1zM342,362h1v2h-1zM343,361h1v3h-1zM344,362h1v2h-1zM345,362h1v2h-1zM346,361h1v4h-1zM347,358h1v6h-1zM348,361h1v2h-1zM349,362h1v2h-1zM350,361h1v4h-1zM351,361h1v2h-1zM352,362h1v2h-1zM353,362h1v2h-1zM354,360h1v4h-1zM355,361h1v3h-1zM356,362h1v1h-1zM357,359h1v6h-1zM358,361h1v3h-1zM359,360h1v4h-1zM360,362h1v2h-1zM361,361h1v3h-1zM362,361h1v2h-1zM363,361h1v3h-1zM364,361h1v3h-1zM365,361h1v2h-1zM366,362h1v2h-1zM367,361h1v2h-1zM368,362h1v4h-1zM369,362h1v3h-1zM370,361h1v3h-1zM371,360h1v4h-1zM372,363h1v3h-1zM373,362h1v2h-1zM374,361h1v3h-1zM375,359h1v6h-1zM376,361h1v3h-1zM377,362h1v2h-1zM378,362h1v5h-1zM379,361h1v3h-1zM380,362h1v3h-1zM381,361h1v3h-1zM382,362h1v2h-1zM383,362h1v3h-1zM384,361h1v3h-1zM385,362h1v2h-1zM386,361h1v3h-1zM387,361h1v3h-1zM388,362h1v2h-1zM389,361h1v5h-1zM390,361h1v4h-1zM391,362h1v2h-1zM392,362h1v2h-1zM393,361h1v4h-1zM394,362h1v2h-1zM395,358h1v6h-1zM396,361h1v3h-1zM397,362h1v3h-1zM398,359h1v6h-1zM399,361h1v3h-1zM400,362h1v3h-1zM401,359h1v5h-1zM402,362h1v2h-1zM403,362h1v2h-1zM404,362h1v2h-1zM405,362h1v2h-1zM406,359h1v5h-1zM407,360h1v4h-1zM408,363h1v4h-1zM409,363h1v3h-1zM410,361h1v3h-1zM411,361h1v3h-1zM412,361h1v4h-1zM413,361h1v3h-1zM414,362h1v2h-1zM415,362h1v2h-1zM416,362h1v3h-1zM417,362h1v4h-1zM418,362h1v2h-1zM419,363h1v2h-1zM420,363h1v2h-1zM421,362h1v2h-1zM422,363h1v2h-1zM423,362h1v3h-1zM424,362h1v3h-1zM425,362h1v3h-1zM426,362h1v3h-1zM427,362h1v4h-1zM428,361h1v4h-1zM429,363h1v1h-1zM430,361h1v3h-1zM431,363h1v2h-1zM432,362h1v5h-1zM433,361h1v3h-1zM434,361h1v3h-1zM435,363h1v4h-1zM436,361h1v3h-1zM437,361h1v4h-1zM438,362h1v2h-1zM439,362h1v2h-1zM440,361h1v3h-1zM441,361h1v3h-1zM442,362h1v3h-1zM443,362h1v2h-1zM444,362h1v3h-1zM445,361h1v3h-1zM446,361h1v5h-1zM447,362h1v5h-1zM448,361h1v3h-1zM449,360h1v5h-1zM450,362h1v3h-1zM451,362h1v3h-1zM452,362h1v4h-1zM453,361h1v3h-1zM454,362h1v2h-1z" fill="#FF00FF"/>
<rect x="456" y="293" width="1" height="134" fill="#F0F0F0"/>
<rect x="466" y="264" width="4" height="1" fill="#0000FF"/>
<rect x="466" y="258" width="2" height="1" fill="#0000FF"/>
<rect x="466" y="252" width="2" height="1" fill="#0000FF"/>
<rect x="466" y="246" width="2" height="1" fill="#0000FF"/>
<rect x="466" y="240" width="4" height="1" fill="#0000FF"/>
<rect x="466" y="234" width="2" height="1" fill="#0000FF"/>
<rect x="466" y="228" width="2" height="1" fill="#0000FF"/>
<rect x="466" y="222" width="2" height="1" fill="#0000FF"/>
<rect x="466" y="216" width="4" height="1" fill="#0000FF"/>
<rect x="466" y="210" width="2" height="1" fill="#0000FF"/>
<rect x="466" y="204" width="2" height="1" fill="#0000FF"/>
<rect x="466" y="198" width="2" height="1" fill="#0000FF"/>
<rect x="466" y="192" width="4" height="1" fill="#0000FF"/>
<rect x="466" y="186" width="2" height="1" fill="#0000FF"/>
<rect x="466" y="180" width="2" height="1" fill="#0000FF"/>
<rect x="466" y="174" width="2" height="1" fill="#0000FF"/>
<rect x="466" y="168" width="4" height="1" fill="#0000FF"/>
<rect x="466" y="161" width="2" height="1" fill="#0000FF"/>
<rect x="466" y="155" width="2" height="1" fill="#0000FF"/>
<rect x="466" y="149" width="2" height="1" fill="#0000FF"/>
<rect x="466" y="143" width="4" height="1" fill="#0000FF"/>
<rect x="466" y="137" width="2" height="1" fill="#0000FF"/>
<rect x="466" y="131" width="2" height="1" fill="#0000FF"/>
<g font-family="Liberation Sans, sans-serif" font-size="11px" fill="#000" stroke="#000" stroke-width="0.2" shape-rendering="auto"><text x="42" y="133.5" text-anchor="end">200</text><text x="42" y="160.5" text-anchor="end">160</text><text x="42" y="187.5" text-anchor="end">120</text><text x="42" y="213.5" text-anchor="end">80</text><text x="42" y="240.5" text-anchor="end">40</text><text x="42" y="295.5" text-anchor="end">10</text><text x="42" y="322.5" text-anchor="end">8</text><text x="42" y="349.5" text-anchor="end">6</text><text x="42" y="375.5" text-anchor="end">4</text><text x="42" y="402.5" text-anchor="end">2</text><text x="471" y="146" text-anchor="start">20</text><text x="471" y="171" text-anchor="start">16</text><text x="471" y="195" text-anchor="start">12</text><text x="471" y="219" text-anchor="start">8</text><text x="471" y="243" text-anchor="start">4</text><text x="471" y="295" text-anchor="start">20</text><text x="471" y="322" text-anchor="start">16</text><text x="471" y="349" text-anchor="start">12</text><text x="471" y="375" text-anchor="start">8</text><text x="471" y="402" text-anchor="start">4</text><text x="50.0" y="278" text-anchor="middle">0.0</text><text x="50.0" y="440" text-anchor="middle">0.0</text><text x="102.2" y="278" text-anchor="middle">1.0</text><text x="102.2" y="440" text-anchor="middle">1.0</text><text x="154.5" y="278" text-anchor="middle">2.0</text><text x="154.5" y="440" text-anchor="middle">2.0</text><text x="206.8" y="278" text-anchor="middle">3.0</text><text x="206.8" y="440" text-anchor="middle">3.0</text><text x="259.0" y="278" text-anchor="middle">4.0</text><text x="259.0" y="440" text-anchor="middle">4.0</text><text x="311.2" y="278" text-anchor="middle">5.0</text><text x="311.2" y="440" text-anchor="middle">5.0</text><text x="363.5" y="278" text-anchor="middle">6.0</text><text x="363.5" y="440" text-anchor="middle">6.0</text><text x="415.8" y="278" text-anchor="middle">7.0</text><text x="415.8" y="440" text-anchor="middle">7.0</text><text x="468.0" y="278" text-anchor="middle">8.0</text><text x="468.0" y="440" text-anchor="middle">8.0</text></g>
</svg>
<!-- Disc info -->
<div class="a grp" style="left:491px;top:124px;width:139px;height:83px"></div>
<div class="a lg t" style="left:498.4px;top:119px;letter-spacing:-0.25px">Disc info</div>
<div class="a t" style="left:500.4px;top:133px;letter-spacing:-0.4px">Type:</div><div class="a nv t" style="left:546px;top:133px;letter-spacing:-0.24px">DVD+R DL</div>
<div class="a t" style="left:500.4px;top:150px;letter-spacing:-0.7px">ID:</div><div class="a nv t" style="left:546px;top:150px;letter-spacing:-0.27px">MKM 003</div>
<div class="a t" style="left:500.4px;top:168px;letter-spacing:-0.55px">Date:</div><div class="a nv t" style="left:546px;top:168px;letter-spacing:-0.24px">26 Mar 2007</div>
<div class="a t" style="left:500.4px;top:186px;letter-spacing:-0.54px">Label:</div><div class="a nv t" style="left:546px;top:186px;letter-spacing:-0.45px">New</div>
<!-- Settings -->
<div class="a grp" style="left:491px;top:215px;width:139px;height:204px"></div>
<div class="a lg t" style="left:498.4px;top:210px;letter-spacing:-0.25px">Settings</div>
<div class="a sunk" style="left:500px;top:225px;width:83px;height:21px"></div>
<div class="a t" style="left:505px;top:229px">8 X</div>
<div class="a btn" style="left:565px;top:227px;width:16px;height:17px"></div>
<svg class="a" style="left:569px;top:233px" width="8" height="5" viewBox="0 0 8 5" shape-rendering="crispEdges"><path d="M0 0h7l-3.5 4z" fill="#000"/></svg>
<div class="a btn" style="left:592px;top:224px;width:23px;height:23px"></div>
<svg class="a" style="left:596px;top:227px" width="14" height="16" viewBox="596 227 14 16"><rect x="596.500" y="227.500" width="13" height="15" fill="#fff" stroke="#000"/>
<path d="M599.300 234.500V232.300q0-1 1-1H603" fill="none" stroke="#008000" stroke-width="1.100"/><path d="M602 228.800L605.300 231.300 602 233.800z" fill="#008000"/>
<path d="M606.700 235V237.500q0 1-1 1H603.500" fill="none" stroke="#008000" stroke-width="1.100"/><path d="M604 236L600.700 238.500 604 241z" fill="#008000"/></svg>
<div class="a t" style="left:502.4px;top:256px;letter-spacing:-0.34px">Start:</div>
<div class="a sunk" style="left:554px;top:251px;width:60px;height:20px"></div><div class="a t" style="left:557.6px;top:254.2px;letter-spacing:-0.3px">0000 MB</div>
<div class="a t" style="left:502.4px;top:279px;letter-spacing:-0.3px">End:</div>
<div class="a sunk" style="left:554px;top:274px;width:60px;height:20px"></div><div class="a t" style="left:557.6px;top:277.2px;letter-spacing:-0.3px">8000 MB</div>
<div class="a sunk cb" style="left:502px;top:296px"></div><div class="a t" style="left:520.5px;top:296px">Quick scan</div>
<div class="a sunk cb" style="left:502px;top:314px"></div><div class="a t" style="left:520.5px;top:314px;letter-spacing:-0.2px">Show C1/PIE</div>
<div class="a sunk cb" style="left:502px;top:329px"></div><div class="a t" style="left:520.5px;top:329px;letter-spacing:-0.2px">Show C2/PIF</div>
<div class="a sunk cb" style="left:502px;top:345px"></div><div class="a t" style="left:520.5px;top:345px;letter-spacing:-0.37px">Show jitter</div>
<div class="a sunk cb" style="left:502px;top:361px"></div><div class="a t" style="left:520.5px;top:361px;letter-spacing:-0.26px">Show read speed</div>
<div class="a sunk cb" style="left:502px;top:376px;background:#D4D0C8"></div><div class="a t" style="left:520.5px;top:376px;color:#808080;text-shadow:1px 1px 0 #fff;letter-spacing:-0.25px">Show write speed</div>
<svg class="a" style="left:502px;top:314px" width="13" height="76" viewBox="0 0 13 76" shape-rendering="crispEdges">
<g fill="#000"><path id="ck" d="M3 5h1v1h1v1h1v-1h1v-1h1v-1h1v-1h1v3h-1v1h-1v1h-1v1h-1v1h-1v-1h-1v-1h-1z"/><use href="#ck" y="15"/><use href="#ck" y="31"/><use href="#ck" y="47"/></g><use href="#ck" y="62" fill="#808080"/></svg>
<div class="a btn" style="left:550px;top:393px;width:75px;height:22px"></div>
<div class="a t" style="left:550px;top:397px;width:75px;text-align:center">Advanced</div>
<!-- Quality -->
<div class="a grp" style="left:491px;top:425px;width:139px;height:26px"></div>
<div class="a t" style="left:502.4px;top:432px;letter-spacing:-0.34px">Quality score:</div><div class="a nv r t" style="left:571px;top:432px;width:50px">95</div>
<!-- Progress -->
<div class="a grp" style="left:491px;top:457px;width:139px;height:55px"></div>
<div class="a" style="left:581px;top:465px;width:37px;height:37px;border-radius:50%;background:conic-gradient(from 0deg,#c4c4c2,#bcbcba 80deg,#cacac8 140deg,#bebebc 200deg,#b2b2b0 250deg,#ecece9 305deg,#d8d8d6 330deg,#c4c4c2 360deg);opacity:0.8;box-shadow:0 0 0 0.700px #b0b0ae"></div>
<div class="a" style="left:593px;top:477px;width:13px;height:13px;border-radius:50%;background:#e2e2df;opacity:0.85"></div>
<div class="a" style="left:597px;top:481px;width:5px;height:5px;border-radius:50%;background:#cfccc5"></div>
<div class="a t" style="left:502.4px;top:466px;letter-spacing:-0.55px">Progress:</div><div class="a nv r t" style="left:561px;top:466px;width:60px;letter-spacing:-0.7px">100 %</div>
<div class="a t" style="left:502.4px;top:482px;letter-spacing:-0.35px">Position:</div><div class="a nv r t" style="left:561px;top:482px;width:60px;letter-spacing:-0.38px">7999 MB</div>
<div class="a t" style="left:502.4px;top:497px;letter-spacing:-0.36px">Speed:</div><div class="a nv r t" style="left:561px;top:497px;width:60px;letter-spacing:-0.3px">3.34 X</div>
<!-- PI Errors -->
<div class="a grp" style="left:14px;top:457px;width:147px;height:56px"></div>
<div class="a lg" style="left:22px;top:451px;width:54px;height:13px"></div>
<div class="a sq" style="left:24px;top:454px;background:#00FFFF"></div><div class="a t" style="left:35.6px;top:451px;letter-spacing:-0.25px">PI Errors</div>
<div class="a t" style="left:22px;top:467px;letter-spacing:-0.1px">Average:</div><div class="a nv r t" style="left:90px;top:467px;width:60px">4.95</div>
<div class="a t" style="left:22px;top:482px;letter-spacing:-0.5px">Maximum:</div><div class="a nv r t" style="left:90px;top:482px;width:60px">170</div>
<div class="a t" style="left:23px;top:497px">Total:</div><div class="a nv r t" style="left:90px;top:497px;width:60px">158499</div>
<!-- PI Failures -->
<div class="a grp" style="left:172px;top:457px;width:147px;height:56px"></div>
<div class="a lg" style="left:180px;top:451px;width:63px;height:13px"></div>
<div class="a sq" style="left:182px;top:454px;background:#FFFF00"></div><div class="a t" style="left:193.6px;top:451px;letter-spacing:-0.25px">PI Failures</div>
<div class="a t" style="left:181px;top:467px;letter-spacing:-0.1px">Average:</div><div class="a nv r t" style="left:249px;top:467px;width:60px">0.02</div>
<div class="a t" style="left:181px;top:482px;letter-spacing:-0.5px">Maximum:</div><div class="a nv r t" style="left:249px;top:482px;width:60px">9</div>
<div class="a t" style="left:182px;top:497px">Total:</div><div class="a nv r t" style="left:249px;top:497px;width:60px">5925</div>
<!-- Jitter -->
<div class="a grp" style="left:331px;top:457px;width:148px;height:43px"></div>
<div class="a lg" style="left:339px;top:451px;width:35px;height:13px"></div>
<div class="a sq" style="left:341px;top:454px;background:#FF00FF"></div><div class="a t" style="left:352px;top:451px;letter-spacing:-0.2px">Jitter</div>
<div class="a t" style="left:340px;top:467px;letter-spacing:-0.1px">Average:</div><div class="a nv r t" style="left:408px;top:467px;width:60px;letter-spacing:-0.3px">9.33 %</div>
<div class="a t" style="left:340px;top:482px;letter-spacing:-0.5px">Maximum:</div><div class="a nv r t" style="left:408px;top:482px;width:60px;letter-spacing:-0.3px">14.3 %</div>
<div class="a t" style="left:340.4px;top:502px;letter-spacing:-0.38px">PO failures:</div><div class="a nv r t" style="left:408px;top:502px;width:60px">0</div>
<!-- watermark -->
<div class="a" style="left:560px;top:503.500px;font-size:19px;line-height:20px;font-weight:bold;color:rgba(255,255,255,0.38);text-shadow:1.500px 1.500px 0 rgba(0,0,0,0.13);transform-origin:0 0;transform:scaleX(0.640)">CDRLabs.com</div>
</div></body></html>
